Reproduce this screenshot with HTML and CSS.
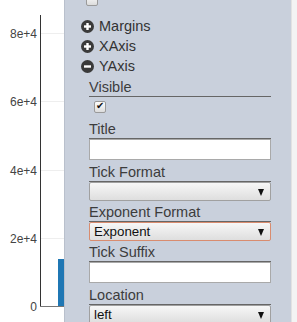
FILE: index.html
```html
<!DOCTYPE html>
<html lang="en">
  <head>
    <meta charset="UTF-8" />
    <title>Chart Editor</title>
    <link rel="stylesheet" href="styles.css">
  </head>
  <body>
    <div class="page">
      <div class="chart">
        <svg width="64" height="322" viewBox="0 0 64 322">
          <g stroke="#eeeeee" stroke-width="1">
            <line x1="40" y1="33.5" x2="64" y2="33.5" />
            <line x1="40" y1="101.5" x2="64" y2="101.5" />
            <line x1="40" y1="170.5" x2="64" y2="170.5" />
            <line x1="40" y1="238.5" x2="64" y2="238.5" />
          </g>
          <rect x="58" y="259" width="6" height="47" fill="#1f77b4" />
          <line x1="40.5" y1="15" x2="40.5" y2="307" stroke="#333" />
          <line x1="40" y1="306.5" x2="64" y2="306.5" stroke="#777" />
          <g class="ticks">
            <text x="37" y="38">8e+4</text>
            <text x="37" y="106">6e+4</text>
            <text x="37" y="175">4e+4</text>
            <text x="37" y="243">2e+4</text>
            <text x="37" y="311">0</text>
          </g>
        </svg>
      </div>

      <div class="panel">
        <div class="cut">
          <input type="checkbox" class="check" />
        </div>

        <div class="group">
          <svg class="toggle" width="13" height="13" viewBox="0 0 13 13">
            <circle cx="6.5" cy="6.5" r="6.5" fill="#3a3a3a" />
            <rect x="3" y="5.3" width="7" height="2.4" fill="#fff" />
            <rect x="5.3" y="3" width="2.4" height="7" fill="#fff" />
          </svg>
          Margins
        </div>
        <div class="group">
          <svg class="toggle" width="13" height="13" viewBox="0 0 13 13">
            <circle cx="6.5" cy="6.5" r="6.5" fill="#3a3a3a" />
            <rect x="3" y="5.3" width="7" height="2.4" fill="#fff" />
            <rect x="5.3" y="3" width="2.4" height="7" fill="#fff" />
          </svg>
          XAxis
        </div>
        <div class="group">
          <svg class="toggle" width="13" height="13" viewBox="0 0 13 13">
            <circle cx="6.5" cy="6.5" r="6.5" fill="#3a3a3a" />
            <rect x="3" y="5.3" width="7" height="2.4" fill="#fff" />
          </svg>
          YAxis
        </div>

        <div class="fields">
          <label class="field-label">Visible</label>
          <div class="check-row">
            <input type="checkbox" class="check" checked />
          </div>

          <label class="field-label">Title</label>
          <input type="text" class="text-input" />

          <label class="field-label">Tick Format</label>
          <div class="select-wrap">
            <select class="select">
              <option></option>
            </select>
          </div>

          <label class="field-label">Exponent Format</label>
          <div class="select-wrap">
            <select class="select active">
              <option>Exponent</option>
            </select>
          </div>

          <label class="field-label">Tick Suffix</label>
          <input type="text" class="text-input" />

          <label class="field-label">Location</label>
          <div class="select-wrap">
            <select class="select">
              <option>left</option>
            </select>
          </div>
        </div>
      </div>

      <div class="edge"></div>
    </div>
  </body>
</html>
```

FILE: styles.css
```css
* {
  box-sizing: border-box;
  margin: 0;
  padding: 0;
}
body {
  font-family: "Liberation Sans", Arial, sans-serif;
  background: #fff;
  overflow: hidden;
}
.page {
  display: flex;
  height: 322px;
}
.chart {
  width: 64px;
  flex-shrink: 0;
}
.chart svg {
  display: block;
}
.ticks text {
  font-family: "Liberation Sans", Arial, sans-serif;
  font-size: 12px;
  fill: #444;
  text-anchor: end;
}

.panel {
  width: 227px;
  flex-shrink: 0;
  background: #c9d0dc;
  border-left: 1px solid #b9c0cc;
  padding-left: 16px;
  overflow: hidden;
  color: #333;
  font-size: 14.5px;
}
.edge {
  flex: 1;
  background: #f3f3f3;
  border-left: 1px solid #e2e2e2;
}

.cut {
  display: flow-root;
  height: 16px;
}
.cut .check {
  margin: -6px 0 0 5px;
}

.group {
  height: 20px;
  display: flex;
  align-items: center;
  gap: 5px;
  color: #333;
}
.toggle {
  display: block;
}

.fields {
  margin-left: 8px;
  width: 182px;
}
.field-label {
  display: block;
  height: 21px;
  line-height: 22px;
  border-bottom: 1px solid #666;
  color: #3c3c3c;
}
.check-row {
  height: 21px;
  padding: 4px 0 0 5px;
}

.check {
  appearance: none;
  display: block;
  width: 12px;
  height: 12px;
  border: 1px solid #9a9a9a;
  border-radius: 2px;
  background: linear-gradient(#fdfdfd, #dcdcdc);
  position: relative;
}
.check:checked::after {
  content: "\2714";
  position: absolute;
  left: 1px;
  top: -2px;
  font-size: 10px;
  color: #111;
}

.text-input {
  display: block;
  width: 100%;
  height: 21px;
  margin-bottom: 1px;
  border: 1px solid #a9a9a9;
  background: #fff;
}
.select-wrap {
  position: relative;
}
.select-wrap::after {
  content: "";
  position: absolute;
  right: 7px;
  top: 7px;
  border-left: 3.5px solid transparent;
  border-right: 3.5px solid transparent;
  border-top: 7px solid #111;
  pointer-events: none;
}
.select {
  appearance: none;
  display: block;
  width: 100%;
  height: 19px;
  padding: 0 4px;
  border: 1px solid #a0a0a0;
  border-radius: 2px;
  background: linear-gradient(#f7f7f7, #dedede);
  font-family: "Liberation Sans", Arial, sans-serif;
  font-size: 13.33px;
  color: #111;
}
.select.active {
  border-color: #d98c6f;
}
```
